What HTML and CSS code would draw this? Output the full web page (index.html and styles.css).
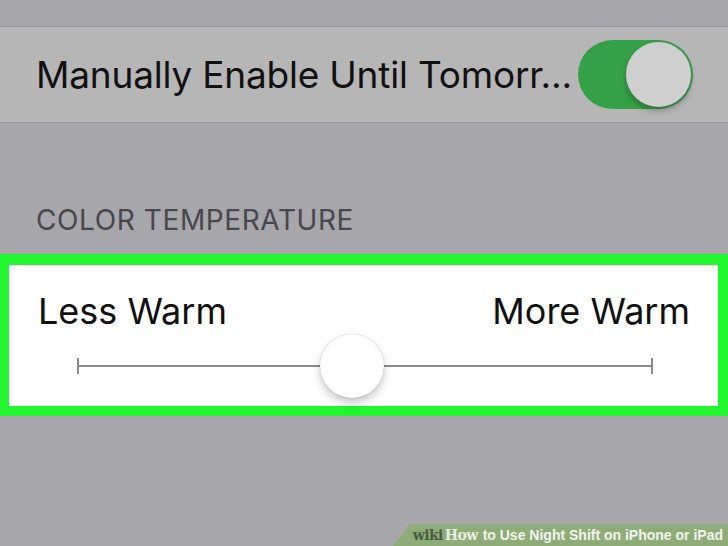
FILE: index.html
```html
<!DOCTYPE html>
<html lang="en">
<head>
  <meta charset="UTF-8">
  <meta name="viewport" content="width=device-width, initial-scale=1.0">
  <title>Night Shift</title>
  <link rel="stylesheet" href="styles.css">
</head>
<body>
  <div class="screen">
    <!-- Manual toggle row -->
    <div class="cell">
      <span class="cell-label">Manually Enable Until Tomorr...</span>
      <div class="switch on">
        <div class="knob"></div>
      </div>
    </div>

    <!-- Color temperature group -->
    <div class="group-title">COLOR TEMPERATURE</div>
    <div class="temp-box">
      <div class="temp-labels">
        <span>Less Warm</span>
        <span>More Warm</span>
      </div>
      <div class="slider">
        <div class="track"></div>
        <div class="thumb"></div>
      </div>
    </div>

    <!-- Footer badge -->
    <div class="badge">
      <span class="wiki">wiki</span><span class="how">How</span>
      <span class="badge-title">to Use Night Shift on iPhone or iPad</span>
    </div>
  </div>
</body>
</html>
```

FILE: styles.css
```css
/* Base */
body {
  margin: 0;
  padding: 0;
  font-family: Inter, "Liberation Sans", Arial, sans-serif;
}

.screen {
  position: relative;
  width: 728px;
  height: 546px;
  overflow: hidden;
  background: #a7a6ab;
  padding-top: 26px;
  box-sizing: border-box;
}

/* Toggle row */
.cell {
  display: flex;
  align-items: center;
  justify-content: space-between;
  height: 95px;
  padding: 0 35px 0 36px;
  background: #b6b6b7;
  border-top: 1px solid #99989d;
  border-bottom: 1px solid #99989d;
}

.cell-label {
  font-size: 37px;
  color: #111;
  letter-spacing: -0.2px;
}

.switch {
  position: relative;
  width: 115px;
  height: 69px;
  border-radius: 35px;
  background: #35a048;
}

.switch .knob {
  position: absolute;
  top: 2px;
  right: 2px;
  width: 65px;
  height: 65px;
  border-radius: 50%;
  background: #cfcfcf;
  box-shadow: 0 4px 6px rgba(0, 0, 0, 0.25);
}

/* Section header */
.group-title {
  padding: 80px 0 0 36px;
  height: 51px;
  font-size: 28px;
  color: #48474c;
  letter-spacing: 0.6px;
}

/* Highlighted slider box */
.temp-box {
  height: 141px;
  background: #fff;
  border: 10px solid #20f52e;
  border-top-width: 11px;
  border-left-width: 9px;
}

.temp-labels {
  display: flex;
  justify-content: space-between;
  padding: 24px 28px 0 29px;
  font-size: 36px;
  color: #111;
  line-height: 44px;
}

.slider {
  position: relative;
  margin: 23px 65px 0 68px;
  height: 20px;
}

.track {
  position: absolute;
  left: 0;
  right: 0;
  top: 9px;
  height: 2px;
  background: #8b8b8b;
}

.track::before,
.track::after {
  content: "";
  position: absolute;
  top: -7px;
  width: 2px;
  height: 16px;
  background: #8b8b8b;
}

.track::before { left: 0; }
.track::after { right: 0; }

.thumb {
  position: absolute;
  left: 243px;
  top: -22px;
  width: 64px;
  height: 64px;
  border-radius: 50%;
  background: #fff;
  box-shadow: 0 0 1px rgba(0, 0, 0, 0.3), 0 5px 9px rgba(0, 0, 0, 0.22);
}

/* wikiHow badge */
.badge {
  position: absolute;
  right: 0;
  bottom: 0;
  height: 22px;
  padding: 0 5px 0 20px;
  background: #8dac78;
  clip-path: polygon(17px 0, 100% 0, 100% 100%, 0 100%);
  display: flex;
  align-items: center;
  font-size: 14px;
  font-weight: bold;
  white-space: nowrap;
}

.wiki {
  font-family: "DejaVu Serif", "Liberation Serif", serif;
  color: #4c5a45;
  letter-spacing: -0.6px;
}

.how {
  font-family: "DejaVu Serif", "Liberation Serif", serif;
  color: #e9efe5;
  margin-left: 2px;
  letter-spacing: -0.6px;
}

.badge-title {
  font-family: "Liberation Sans", Arial, sans-serif;
  color: #f2f4f0;
  margin-left: 5px;
}
```
